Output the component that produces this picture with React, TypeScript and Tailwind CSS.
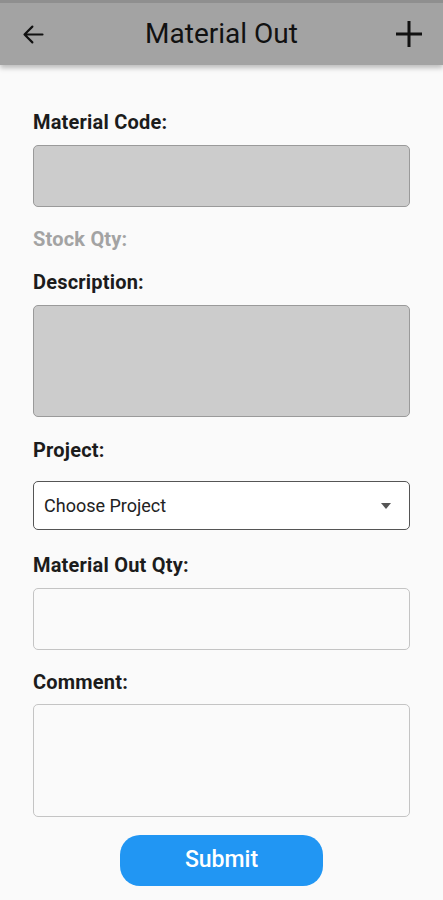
import React from 'react';

const Label = ({ children, muted }: { children: React.ReactNode; muted?: boolean }) => (
  <div className={`text-[20px] font-bold leading-6 tracking-[0.2px] ${muted ? 'text-[#a3a3a3]' : 'text-[#1c1c1c]'}`}>
    {children}
  </div>
);

const App = () => {
  return (
    <div className="min-h-[900px] w-[443px] bg-[#fafafa]" style={{ fontFamily: 'Roboto, "Liberation Sans", sans-serif' }}>
      {/* Header */}
      <header className="h-[65px] bg-[#a3a3a3] border-t-[3px] border-[#8f8f8f] shadow-[0_3px_5px_rgba(0,0,0,0.25)] flex items-center justify-between pl-[20px] pr-[20px]">
        <button className="w-[28px] h-[28px] flex items-center justify-start text-[#111]">
          <svg width="27" height="27" viewBox="0 0 24 24" fill="none" stroke="currentColor" strokeWidth="1.9" strokeLinecap="round" strokeLinejoin="round">
            <path d="M20 12H4M11 5l-7 7 7 7" />
          </svg>
        </button>
        <h1 className="text-[28px] font-normal text-[#111] leading-none">Material Out</h1>
        <button className="w-[28px] h-[28px] flex items-center justify-center text-[#111]">
          <svg width="28" height="28" viewBox="0 0 28 28" fill="none" stroke="currentColor" strokeWidth="3">
            <path d="M14 1v26M1 14h26" />
          </svg>
        </button>
      </header>

      {/* Form */}
      <div className="px-[33px] pt-[45px] flex flex-col">
        <Label>Material Code:</Label>
        <div className="mt-[11px] h-[62px] rounded-[5px] border border-[#9a9a9a] bg-[#cccccc]" />

        <div className="mt-[20px]">
          <Label muted>Stock Qty:</Label>
        </div>

        <div className="mt-[19px]">
          <Label>Description:</Label>
        </div>
        <div className="mt-[11px] h-[112px] rounded-[5px] border border-[#9a9a9a] bg-[#cccccc]" />

        <div className="mt-[21px]">
          <Label>Project:</Label>
        </div>
        <div className="mt-[19px] h-[49px] rounded-[5px] border border-[#555] bg-white flex items-center justify-between pl-[10px] pr-[18px]">
          <span className="text-[18px] text-[#222]">Choose Project</span>
          <svg width="10" height="6" viewBox="0 0 10 6">
            <path d="M0 0h10L5 6z" fill="#555" />
          </svg>
        </div>

        <div className="mt-[23px]">
          <Label>Material Out Qty:</Label>
        </div>
        <div className="mt-[11px] h-[62px] rounded-[5px] border border-[#c4c4c4] bg-[#fafafa]" />

        <div className="mt-[20px]">
          <Label>Comment:</Label>
        </div>
        <div className="mt-[10px] h-[113px] rounded-[5px] border border-[#c4c4c4] bg-[#fafafa]" />

        <div className="flex justify-center mt-[18px]">
          <button className="w-[203px] h-[51px] rounded-[20px] bg-[#2196f3] text-white text-[23px] font-medium">
            Submit
          </button>
        </div>
      </div>
    </div>
  );
};

export default App;
